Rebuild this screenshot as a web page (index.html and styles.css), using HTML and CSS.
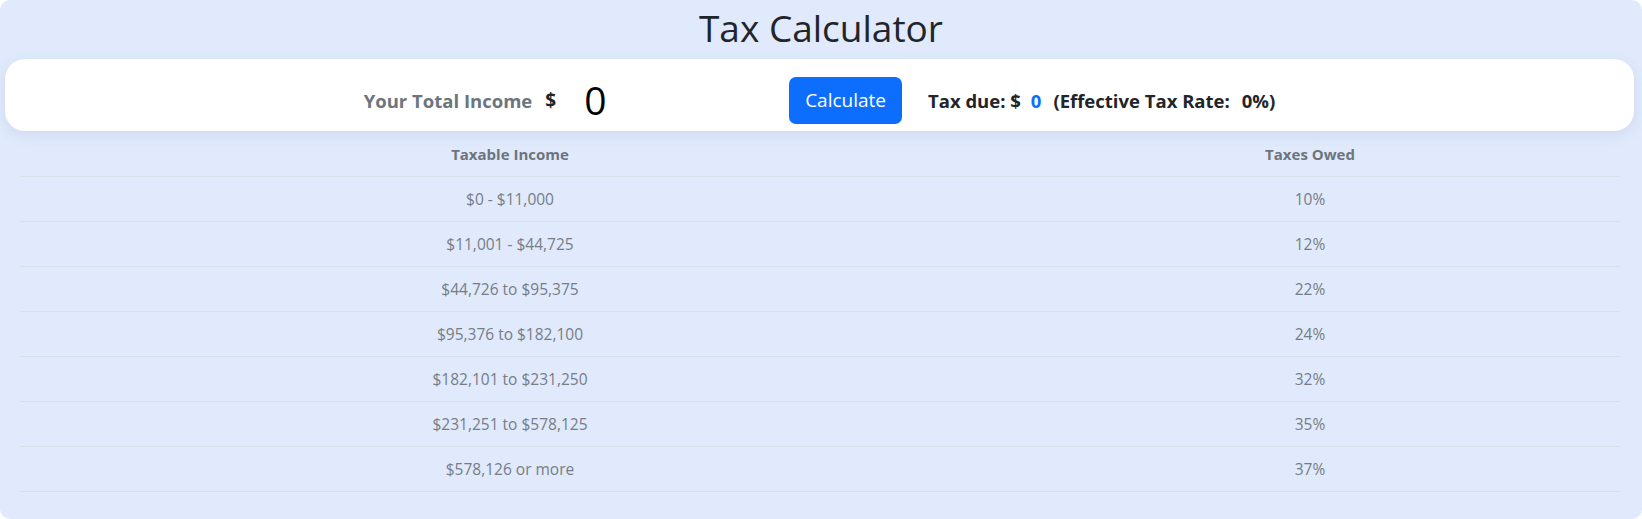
FILE: index.html
```html
<!DOCTYPE html>
<html lang="en">
<head>
<meta charset="utf-8">
<title>Tax Calculator</title>
<link rel="stylesheet" href="styles.css">
</head>
<body>
<div class="app">
  <h1 class="title">Tax Calculator</h1>
  <div class="card">
    <label class="income-label" for="income">Your Total Income</label>
    <span class="dollar">$</span>
    <input id="income" class="income-input" type="text" value="0">
    <button class="btn-calc" type="button">Calculate</button>
    <div class="result">
      <span class="tax-label">Tax due: $</span><span class="tax-value">0</span><span class="rate-label">(Effective Tax Rate:</span><span class="rate-value">0%)</span>
    </div>
  </div>
  <table class="brackets">
    <colgroup>
      <col class="col-income">
      <col class="col-rate">
    </colgroup>
    <thead>
      <tr><th>Taxable Income</th><th>Taxes Owed</th></tr>
    </thead>
    <tbody>
      <tr><td>$0 - $11,000</td><td>10%</td></tr>
      <tr><td>$11,001 - $44,725</td><td>12%</td></tr>
      <tr><td>$44,726 to $95,375</td><td>22%</td></tr>
      <tr><td>$95,376 to $182,100</td><td>24%</td></tr>
      <tr><td>$182,101 to $231,250</td><td>32%</td></tr>
      <tr><td>$231,251 to $578,125</td><td>35%</td></tr>
      <tr><td>$578,126 or more</td><td>37%</td></tr>
    </tbody>
  </table>
</div>
</body>
</html>
```

FILE: styles.css
```css
* { box-sizing: border-box; }

html, body {
  margin: 0;
  padding: 0;
  background: #ffffff;
}

body {
  font-family: "Open Sans", "Noto Sans", sans-serif;
  color: #212529;
}

.app {
  background: #e0eafc;
  height: 519px;
  border-radius: 10px;
  padding: 4px 0 0;
  overflow: hidden;
}

.title {
  margin: 0 0 7px;
  font-size: 37px;
  font-weight: 400;
  line-height: 48px;
  text-align: center;
  color: #212529;
}

.card {
  margin: 0 8px 0 5px;
  height: 72px;
  padding-top: 10px;
  background: #ffffff;
  border-radius: 20px;
  box-shadow: 0 4px 14px rgba(60, 80, 140, 0.10);
  display: flex;
  align-items: center;
  justify-content: center;
}

.income-label {
  font-size: 18.5px;
  font-weight: 700;
  color: #6c757d;
  margin-right: 13px;
}

.dollar {
  font-size: 19px;
  font-weight: 700;
  color: #212529;
}

.income-input {
  width: 215px;
  margin: 0 10px 0 8px;
  padding: 0 0 0 20px;
  border: none;
  outline: none;
  background: transparent;
  font-family: inherit;
  font-size: 39px;
  color: #000000;
  line-height: 1.2;
}

.btn-calc {
  height: 47px;
  padding: 0 16px;
  border: none;
  border-radius: 7px;
  background: #0d6efd;
  color: #ffffff;
  font-family: inherit;
  font-size: 19px;
  line-height: 47px;
  margin-right: 26px;
}

.result {
  display: flex;
  align-items: baseline;
  font-size: 18.5px;
  font-weight: 700;
  color: #212529;
  white-space: nowrap;
}

.tax-value {
  color: #0d6efd;
  margin: 0 12px 0 10px;
}

.rate-value {
  margin-left: 12px;
}

.brackets {
  margin: 1px 22px 0 20px;
  width: calc(100% - 42px);
  border-collapse: collapse;
  font-size: 15.5px;
  color: #6c757d;
}

.col-income { width: 980px; }
.col-rate { width: auto; }

.brackets th,
.brackets td {
  text-align: center;
  padding: 12px 8px;
  line-height: 20px;
  border-bottom: 1px solid #d9dfe8;
}

.brackets th {
  font-size: 15px;
  font-weight: 700;
  color: #6c757d;
}

.brackets td {
  font-weight: 400;
  color: #767d85;
}
```
